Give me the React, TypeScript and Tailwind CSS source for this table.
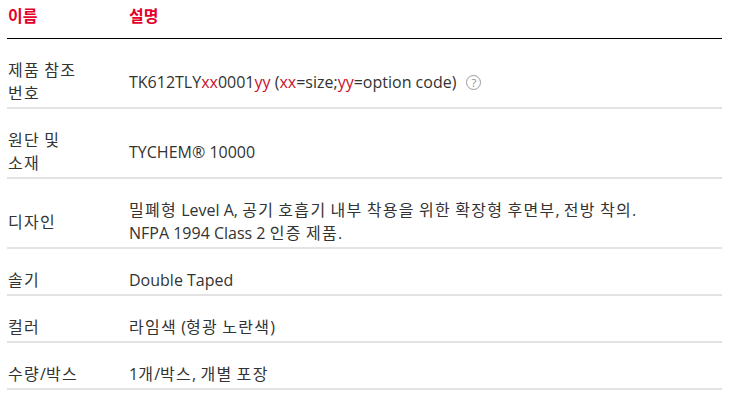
// hangul runs get a little extra advance so Korean lines match the reference width
function K({ children }: { children: string }) {
  return (
    <>
      {children.split(/([가-힣]+)/).map((part, i) =>
        /[가-힣]/.test(part) ? (
          <span key={i} className="tracking-[1.3px]">
            {part}
          </span>
        ) : (
          part
        ),
      )}
    </>
  )
}

const red = 'text-[#c8102e]'

const rows: { name: string[]; desc: React.ReactNode }[] = [
  {
    name: ['제품 참조', '번호'],
    desc: (
      <span className="inline-flex items-center">
        <span>
          TK612TLY<span className={red}>xx</span>0001<span className={red}>yy</span> (<span className={red}>xx</span>
          =size;<span className={red}>yy</span>=option code)
        </span>
        <span className="ml-[10px] inline-flex h-[15px] w-[15px] items-center justify-center rounded-full border border-[#9a9a9a] text-[11px] leading-none text-[#8a8a8a]">
          ?
        </span>
      </span>
    ),
  },
  { name: ['원단 및', '소재'], desc: 'TYCHEM® 10000' },
  {
    name: ['디자인'],
    desc: (
      <>
        <K>밀폐형 Level A, 공기 호흡기 내부 착용을 위한 확장형 후면부, 전방 착의.</K>
        <br />
        <K>NFPA 1994 Class 2 인증 제품.</K>
      </>
    ),
  },
  { name: ['솔기'], desc: 'Double Taped' },
  { name: ['컬러'], desc: <K>라임색 (형광 노란색)</K> },
  { name: ['수량/박스'], desc: <K>1개/박스, 개별 포장</K> },
]

export default function App() {
  return (
    <div className="min-h-screen bg-white px-[7px] font-['Open_Sans','Noto_Sans_CJK_KR',sans-serif] text-[16px] text-[#333333]">
      <table className="w-[715px] border-collapse">
        <thead>
          <tr className="border-b border-black">
            <th className="w-[121px] pt-[4px] pb-[10px] pl-[1px] text-left align-middle text-[16px] leading-[24px] font-semibold text-[#e4002b]">
              이름
            </th>
            <th className="pt-[4px] pb-[10px] pl-[1px] text-left align-middle text-[16px] leading-[24px] font-semibold text-[#e4002b]">
              설명
            </th>
          </tr>
        </thead>
        <tbody>
          {rows.map((r) => (
            <tr key={r.name.join('')} className="border-b-2 border-[#e3e3e3]">
              <td className="pt-[20px] pb-[2px] pl-[1px] align-middle leading-[23px]">
                {r.name.map((n, i) => (
                  <div key={i}>
                    <K>{n}</K>
                  </div>
                ))}
              </td>
              <td className="pt-[20px] pb-[2px] pl-[1px] align-middle leading-[23px]">{r.desc}</td>
            </tr>
          ))}
        </tbody>
      </table>
    </div>
  )
}
